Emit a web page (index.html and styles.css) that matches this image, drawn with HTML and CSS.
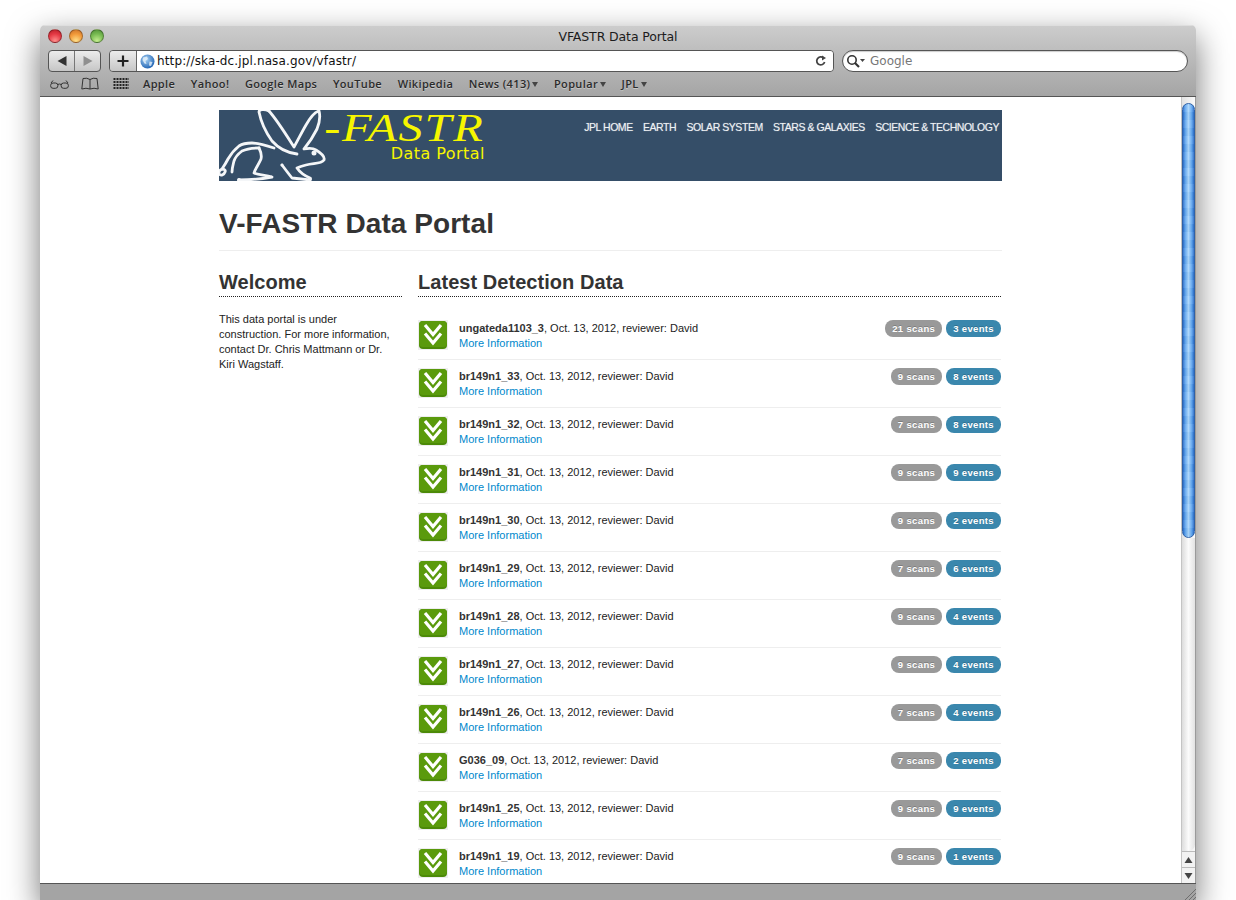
FILE: index.html
```html
<!DOCTYPE html>
<html lang="en">
<head>
<meta charset="utf-8">
<title>VFASTR Data Portal</title>
<link rel="stylesheet" href="styles.css">
</head>
<body>
<svg class="defs" width="0" height="0" aria-hidden="true">
  <symbol id="dl" viewBox="0 0 30 30">
    <rect x="0" y="0" width="30" height="30" fill="#eeeeee"/>
    <rect x="1" y="1" width="28" height="28" rx="4" fill="#4c8a08"/>
    <rect x="1" y="1" width="28" height="26" rx="4" fill="#5a9a0c"/>
    <path d="M7 5 15 14.500 23 5M7 13.500 15 23 23 13.500" fill="none" stroke="#fff" stroke-width="3.200"/>
  </symbol>
</svg>
<div class="window">
  <header class="chrome">
    <div class="titlebar">
      <div class="lights"><i class="light red"></i><i class="light amber"></i><i class="light green"></i></div>
      <div class="title">VFASTR Data Portal</div>
    </div>
    <div class="toolbar">
      <div class="nav-btns">
        <span class="nav-btn"><svg width="12" height="12" viewBox="0 0 12 12"><path d="M1.500 6 10.500 1V11Z" fill="#333"/></svg></span>
        <span class="nav-btn"><svg width="12" height="12" viewBox="0 0 12 12"><path d="M10.500 6 1.500 1V11Z" fill="#8f8f8f"/></svg></span>
      </div>
      <div class="address">
        <span class="plus"><svg width="12" height="12" viewBox="0 0 12 12"><path d="M6 .5V11.500M.5 6H11.500" stroke="#222" stroke-width="2.200"/></svg></span>
        <div class="url-field">
          <svg class="globe" width="15" height="15" viewBox="0 0 15 15"><defs><radialGradient id="g" cx=".4" cy=".35" r=".7"><stop offset="0" stop-color="#a9d3f5"/><stop offset="1" stop-color="#1b5fb0"/></radialGradient></defs><circle cx="7.500" cy="7.500" r="7" fill="url(#g)"/><path d="M3 3.500 7 2.500 8 5 5.500 7 6.500 10 4.500 9.500 2.500 6ZM9.500 7.500 12.500 8 11 12 9 11.500Z" fill="#e9f2fa" opacity=".8"/></svg>
          <span class="url">http://ska-dc.jpl.nasa.gov/vfastr/</span>
          <svg class="reload" width="12" height="12" viewBox="0 0 12 12"><path d="M9.600 7A4 4 0 1 1 8.500 3" fill="none" stroke="#444" stroke-width="1.800"/><path d="M7 .5 11 3 7 5.500Z" fill="#444"/></svg>
        </div>
      </div>
      <div class="search">
        <svg width="20" height="14" viewBox="0 0 20 14"><circle cx="6" cy="6" r="4.200" fill="none" stroke="#333" stroke-width="1.600"/><path d="M9 9 13 13" stroke="#333" stroke-width="2.200"/><path d="M14 5H19L16.500 8Z" fill="#444"/></svg>
        <span class="search-text">Google</span>
      </div>
    </div>
    <div class="bookmarks">
      <svg class="bm-icon glasses" width="19" height="10" viewBox="0 0 19 10"><rect x=".6" y="4" width="7.300" height="5.300" rx="2.500" fill="none" stroke="#333"/><rect x="11.100" y="4" width="7.300" height="5.300" rx="2.500" fill="none" stroke="#333"/><path d="M7.800 5.500Q9.500 4.500 11.200 5.500M1 4 3 1.500M18 4 16 1.500" fill="none" stroke="#333"/></svg>
      <svg class="bm-icon book" width="18" height="13" viewBox="0 0 18 13"><path d="M9 2.500Q6 .5 2 1.500L.8 12Q5 10.500 9 12Q13 10.500 17.200 12L16 1.500Q12 .5 9 2.500V12" fill="none" stroke="#333"/></svg>
      <svg class="bm-icon grid" width="16" height="13" viewBox="0 0 16 13"><path d="M.5 2H16M.5 5H16M.5 8H16M.5 11H16" stroke="#222" stroke-width="2" stroke-dasharray="2 1"/></svg>
      <nav class="bm-links">
        <span class="bm">Apple</span>
        <span class="bm">Yahoo!</span>
        <span class="bm">Google Maps</span>
        <span class="bm">YouTube</span>
        <span class="bm">Wikipedia</span>
        <span class="bm menu">News (413)</span>
        <span class="bm menu">Popular</span>
        <span class="bm menu">JPL</span>
      </nav>
    </div>
  </header>

  <div class="viewport">
    <main class="page">
      <div class="banner">
        <svg class="rabbit" width="107" height="71" viewBox="0 0 107 71">
          <g fill="none" stroke="#f4f6f8" stroke-width="2.800" stroke-linecap="round" stroke-linejoin="round">
            <path d="M50 1C46 -1 40 -1 40 2C42 12 48 24 53 31C60 39 70 43 78 44"/>
            <path d="M50 1C58 10 68 26 75 37C80 28 84 20 87 15C91 8 96 2 100 1C102 8 100 14 98 19C94 27 90 33 85 39C90 38 94 38 97 40C102 43 106 47 105 50C102 54 96 53 87 55C83 56 80 57 78 58C80 61 84 65 91 68"/>
            <path d="M55 38C46 35 40 33 33 33C27 33 23 34 20 36C15 40 12 44 9 49C7 53 5 56 3 59C1 60 -1 61 0 64C2 66 5 65 6 62C7 60 5 59 3 59"/>
            <path d="M40 38C33 38 27 39 23 41C19 44 16 48 15 51C14 55 13 58 13 62"/>
            <path d="M40 38C42 42 43 45 42 49C40 54 36 59 35 63C40 65 47 65 53 67C42 69 30 70 20 70"/>
            <path d="M63 55C66 59 69 63 73 68L91 70"/>
          </g>
          <circle cx="95" cy="43" r="2.500" fill="#f4f6f8"/>
          <circle cx="20" cy="70" r="2" fill="#f4f6f8"/>
          <circle cx="91" cy="69" r="2" fill="#f4f6f8"/>
          <circle cx="63" cy="55" r="1.500" fill="#f4f6f8"/>
        </svg>
        <div class="logo">
          <span class="logo-main">-FASTR</span>
          <span class="logo-sub">Data Portal</span>
        </div>
        <nav class="site-nav">
          <span>JPL HOME</span>
          <span>EARTH</span>
          <span>SOLAR SYSTEM</span>
          <span>STARS &amp; GALAXIES</span>
          <span>SCIENCE &amp; TECHNOLOGY</span>
        </nav>
      </div>

      <h1 class="page-title">V-FASTR Data Portal</h1>

      <div class="columns">
        <aside class="side">
          <h2 class="section">Welcome</h2>
          <p class="intro">This data portal is under construction. For more information, contact Dr. Chris Mattmann or Dr. Kiri Wagstaff.</p>
        </aside>
        <section class="latest">
          <h2 class="section">Latest Detection Data</h2>
          <ul class="rows">
            <li class="row"><svg class="dl"><use href="#dl"/></svg><div class="info"><div><b>ungateda1103_3</b>, Oct. 13, 2012, reviewer: David</div><a class="more">More Information</a></div><div class="badges"><span class="badge scans">21 scans</span><span class="badge events">3 events</span></div></li>
            <li class="row"><svg class="dl"><use href="#dl"/></svg><div class="info"><div><b>br149n1_33</b>, Oct. 13, 2012, reviewer: David</div><a class="more">More Information</a></div><div class="badges"><span class="badge scans">9 scans</span><span class="badge events">8 events</span></div></li>
            <li class="row"><svg class="dl"><use href="#dl"/></svg><div class="info"><div><b>br149n1_32</b>, Oct. 13, 2012, reviewer: David</div><a class="more">More Information</a></div><div class="badges"><span class="badge scans">7 scans</span><span class="badge events">8 events</span></div></li>
            <li class="row"><svg class="dl"><use href="#dl"/></svg><div class="info"><div><b>br149n1_31</b>, Oct. 13, 2012, reviewer: David</div><a class="more">More Information</a></div><div class="badges"><span class="badge scans">9 scans</span><span class="badge events">9 events</span></div></li>
            <li class="row"><svg class="dl"><use href="#dl"/></svg><div class="info"><div><b>br149n1_30</b>, Oct. 13, 2012, reviewer: David</div><a class="more">More Information</a></div><div class="badges"><span class="badge scans">9 scans</span><span class="badge events">2 events</span></div></li>
            <li class="row"><svg class="dl"><use href="#dl"/></svg><div class="info"><div><b>br149n1_29</b>, Oct. 13, 2012, reviewer: David</div><a class="more">More Information</a></div><div class="badges"><span class="badge scans">7 scans</span><span class="badge events">6 events</span></div></li>
            <li class="row"><svg class="dl"><use href="#dl"/></svg><div class="info"><div><b>br149n1_28</b>, Oct. 13, 2012, reviewer: David</div><a class="more">More Information</a></div><div class="badges"><span class="badge scans">9 scans</span><span class="badge events">4 events</span></div></li>
            <li class="row"><svg class="dl"><use href="#dl"/></svg><div class="info"><div><b>br149n1_27</b>, Oct. 13, 2012, reviewer: David</div><a class="more">More Information</a></div><div class="badges"><span class="badge scans">9 scans</span><span class="badge events">4 events</span></div></li>
            <li class="row"><svg class="dl"><use href="#dl"/></svg><div class="info"><div><b>br149n1_26</b>, Oct. 13, 2012, reviewer: David</div><a class="more">More Information</a></div><div class="badges"><span class="badge scans">7 scans</span><span class="badge events">4 events</span></div></li>
            <li class="row"><svg class="dl"><use href="#dl"/></svg><div class="info"><div><b>G036_09</b>, Oct. 13, 2012, reviewer: David</div><a class="more">More Information</a></div><div class="badges"><span class="badge scans">7 scans</span><span class="badge events">2 events</span></div></li>
            <li class="row"><svg class="dl"><use href="#dl"/></svg><div class="info"><div><b>br149n1_25</b>, Oct. 13, 2012, reviewer: David</div><a class="more">More Information</a></div><div class="badges"><span class="badge scans">9 scans</span><span class="badge events">9 events</span></div></li>
            <li class="row"><svg class="dl"><use href="#dl"/></svg><div class="info"><div><b>br149n1_19</b>, Oct. 13, 2012, reviewer: David</div><a class="more">More Information</a></div><div class="badges"><span class="badge scans">9 scans</span><span class="badge events">1 events</span></div></li>
          </ul>
        </section>
      </div>
    </main>
    <div class="scrollbar">
      <div class="track">
        <div class="thumb"></div>
        <div class="lower"></div>
      </div>
      <div class="arrow"><svg width="9" height="8" viewBox="0 0 9 8"><path d="M4.500 1 8.500 7H.5Z" fill="#444"/></svg></div>
      <div class="arrow"><svg width="9" height="8" viewBox="0 0 9 8"><path d="M4.500 7 8.500 1H.5Z" fill="#444"/></svg></div>
    </div>
  </div>
  <footer class="status">
    <svg class="grip" width="12" height="12" viewBox="0 0 12 12"><path d="M12 1 1 12M12 5 5 12M12 9 9 12" stroke="#6e6e6e"/></svg>
  </footer>
</div>
</body>
</html>
```

FILE: styles.css
```css
* { box-sizing: border-box; }
html, body { margin: 0; padding: 0; height: 100%; overflow: hidden; background: #fff; }
body { padding: 25px 40px 0; font-family: "Liberation Sans", Arial, sans-serif; }
.defs { display: block; width: 0; height: 0; }

.window {
  width: 1156px;
  height: 875px;
  display: flex;
  flex-direction: column;
  border-radius: 5px 5px 0 0;
  overflow: hidden;
  box-shadow: 0 12px 32px rgba(0, 0, 0, .55);
  background: #fff;
}
.chrome {
  height: 72px;
  flex: none;
  background: linear-gradient(#cdcdcd, #c0c0c0 30%, #a5a5a5);
  border-bottom: 1px solid #555;
  box-shadow: inset 0 1px 0 #dedede;
}
.titlebar { height: 25px; position: relative; display: flex; align-items: center; justify-content: center; }
.title { font: 12.5px/22px "DejaVu Sans", sans-serif; color: #1c1c1c; padding-bottom: 1px; letter-spacing: -.12px; }
.lights { position: absolute; left: 8px; top: 4px; display: flex; gap: 7px; }
.light { width: 14px; height: 14px; border-radius: 50%; border: 1px solid rgba(0, 0, 0, .3); display: block; }
.red { background: radial-gradient(circle at 50% 90%, #ff8f8c, #e53a45 55%, #b51d26); }
.amber { background: radial-gradient(circle at 50% 90%, #ffe08a, #f29a3a 55%, #c8702a); }
.green { background: radial-gradient(circle at 50% 90%, #c5ee90, #78bb52 55%, #4f8f35); }

.toolbar { height: 22px; display: flex; padding: 0 8px; margin-top: 0; }
.nav-btns { width: 53px; height: 22px; display: flex; border: 1px solid #555; border-radius: 4px; background: linear-gradient(#ececec, #c6c6c6); overflow: hidden; }
.nav-btn { flex: 1; display: flex; align-items: center; justify-content: center; }
.nav-btn + .nav-btn { border-left: 1px solid #777; }
.address { margin-left: 8px; width: 725px; height: 22px; display: flex; border: 1px solid #555; border-radius: 4px; overflow: hidden; }
.plus { width: 27px; flex: none; display: flex; align-items: center; justify-content: center; background: linear-gradient(#ececec, #c6c6c6); border-right: 1px solid #666; }
.url-field { flex: 1; background: #fff; display: flex; align-items: center; padding: 0 6px 0 3px; }
.globe { flex: none; }
.url { margin-left: 2px; font: 12px "DejaVu Sans", sans-serif; color: #111; flex: 1; letter-spacing: .13px; }
.search { margin-left: 8px; width: 346px; height: 22px; border: 1px solid #555; border-radius: 11px; background: #fff; display: flex; align-items: center; padding-left: 3px; box-shadow: inset 0 1px 1px #ccc; }
.search-text { margin-left: 4px; font: 12px "DejaVu Sans", sans-serif; color: #777; }

.bookmarks { height: 24px; display: flex; align-items: center; padding: 0 0 1px 10px; }
.bm-icon { flex: none; }
.book { margin-left: 12px; }
.grid { margin-left: 14px; }
.bm-links { display: flex; gap: 15.600px; margin-left: 14px; }
.bm { font: 600 11px "Open Sans", sans-serif; color: #2b2b2b; text-shadow: 0 1px 0 rgba(255, 255, 255, .35); letter-spacing: .36px; }
.menu::after { content: ""; display: inline-block; margin-left: 2px; vertical-align: 1px; border: 3.500px solid transparent; border-top: 5px solid #444; border-bottom: 0; }

.viewport { flex: 1; min-height: 0; display: flex; }
.page { flex: 1; min-width: 0; overflow: hidden; padding: 13px 0 0 179px; color: #333; }
.banner { width: 783px; height: 71px; background: #354e68; display: flex; }
.rabbit { flex: none; }
.logo { width: 159px; flex: none; display: flex; flex-direction: column; align-items: flex-end; color: #f6f600; }
.logo-main { font: italic 40px/36px "Liberation Serif", serif; letter-spacing: 1.500px; transform: scaleX(1.210); transform-origin: right center; }
.logo-sub { font: 16px/16px "DejaVu Sans", sans-serif; letter-spacing: .45px; }
.site-nav { margin-left: auto; display: flex; gap: 10.300px; padding: 11px 3px 0 0; font-size: 10.500px; line-height: 13px; color: #eef1f4; letter-spacing: -.45px; text-shadow: 0 0 1px rgba(255, 255, 255, .5); }

.page-title { margin: 0; width: 783px; height: 70px; border-bottom: 1px solid #eeeeee; font-size: 28px; line-height: 86px; font-weight: bold; color: #333; letter-spacing: .06px; }
.columns { width: 783px; display: flex; }
.side { width: 183px; flex: none; margin-top: 18px; }
.latest { width: 583px; flex: none; margin-left: 16px; margin-top: 18px; }
.section { margin: 0; height: 28px; border-bottom: 1px dotted #222; font-size: 20px; line-height: 26px; font-weight: bold; color: #333; letter-spacing: .05px; }
.intro { margin: 15px 0 0; max-width: 176px; font-size: 11px; line-height: 15px; color: #222; }
.rows { list-style: none; margin: 15px 0 0; padding: 0; }
.row { height: 48px; display: flex; padding-top: 8px; border-bottom: 1px solid #eeeeee; font-size: 11px; line-height: 15px; color: #222; }
.dl { width: 30px; height: 30px; flex: none; }
.info { margin: 1px 0 0 11px; flex: 1; }
.info b { color: #333; }
.more { color: #0088cc; display: block; }
.badges { display: flex; gap: 4px; align-items: flex-start; }
.badge { height: 17px; border-radius: 8px; padding: 0 7px; font-size: 9.500px; line-height: 17px; font-weight: bold; color: #fff; letter-spacing: .35px; text-shadow: 0 -1px 0 rgba(0, 0, 0, .2); }
.scans { background: #999; }
.events { background: #3a87ad; }

.scrollbar { width: 15px; flex: none; display: flex; flex-direction: column; border-left: 1px solid #c4c4c4; border-right: 1px solid #9a9a9a; background: #eee; }
.track { flex: 1; display: flex; flex-direction: column; padding-top: 6px; background: linear-gradient(90deg, #e2e2e2, #fafafa); }
.thumb {
  height: 435px;
  flex: none;
  border-radius: 7px;
  border: 1px solid #2f62a8;
  background:
    repeating-linear-gradient(rgba(255, 255, 255, .07) 0 8px, rgba(0, 0, 0, .02) 8px 16px),
    linear-gradient(90deg, #2a6cc8, #5ea4ee 20%, #a8d4fa 50%, #5ea4ee 80%, #2a6cc8);
}
.lower { flex: 1; border-radius: 0 0 7px 7px; background: linear-gradient(90deg, #dcdcdc, #fbfbfb 50%, #e2e2e2); }
.arrow { height: 16px; flex: none; display: flex; align-items: center; justify-content: center; border-top: 1px solid #bbb; background: #f2f2f2; }

.status { height: 17px; flex: none; background: #a4a4a4; border-top: 1px solid #555; display: flex; justify-content: flex-end; align-items: flex-end; }
.grip { display: block; }
```
